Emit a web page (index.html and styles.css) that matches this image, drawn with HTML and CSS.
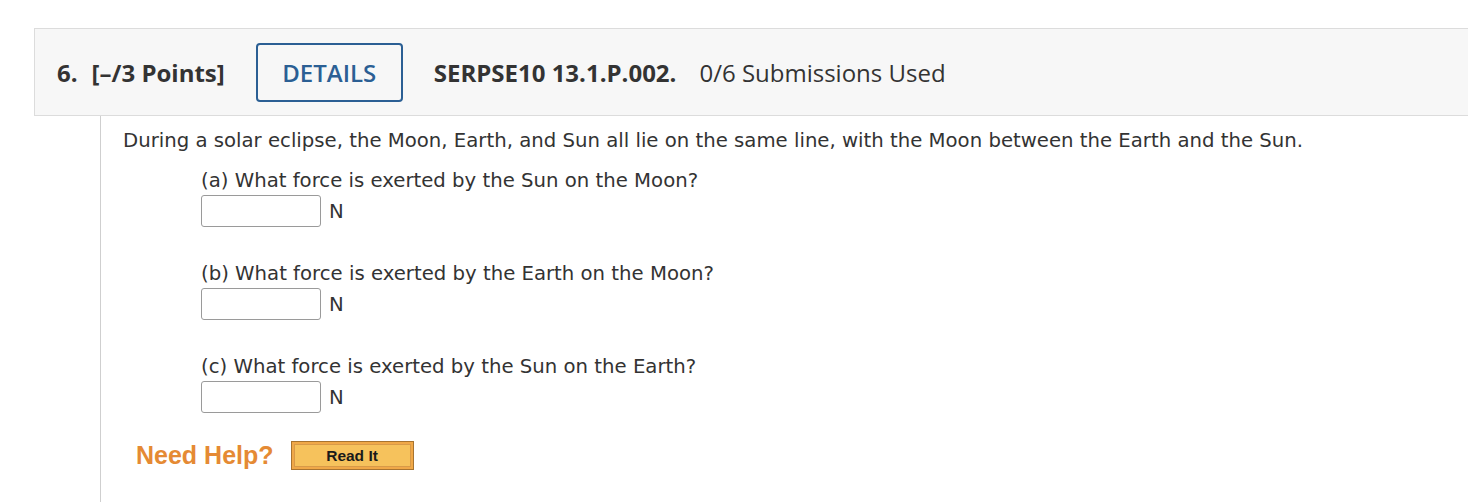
FILE: index.html
```html
<!DOCTYPE html>
<html>
<head>
<meta charset="utf-8">
<link rel="stylesheet" href="styles.css">
</head>
<body>
<div class="question">
  <div class="qhead">
    <span class="qnum">6.</span>
    <span class="points">[–/3 Points]</span>
    <button class="details">DETAILS</button>
    <span class="code">SERPSE10 13.1.P.002.</span>
    <span class="subs">0/6 Submissions Used</span>
  </div>
  <div class="qbody">
    <p class="intro">During a solar eclipse, the Moon, Earth, and Sun all lie on the same line, with the Moon between the Earth and the Sun.</p>
    <div class="part">
      <div class="prompt">(a) What force is exerted by the Sun on the Moon?</div>
      <div class="answer"><span class="box"></span><span class="unit">N</span></div>
    </div>
    <div class="part">
      <div class="prompt">(b) What force is exerted by the Earth on the Moon?</div>
      <div class="answer"><span class="box"></span><span class="unit">N</span></div>
    </div>
    <div class="part">
      <div class="prompt">(c) What force is exerted by the Sun on the Earth?</div>
      <div class="answer"><span class="box"></span><span class="unit">N</span></div>
    </div>
    <div class="help">
      <span class="needhelp">Need Help?</span>
      <span class="readit"><span class="readit-inner">Read It</span></span>
    </div>
  </div>
</div>
</body>
</html>
```

FILE: styles.css
```css
html, body {
  margin: 0;
  padding: 0;
  background: #ffffff;
}
.question {
  padding-top: 28px;
}
.qhead {
  margin-left: 34px;
  height: 86px;
  background: #f7f7f7;
  border: 1px solid #dcdcdc;
  border-right: none;
  display: flex;
  align-items: center;
  font-family: "Open Sans", sans-serif;
  font-size: 24px;
  color: #333333;
  padding-left: 22px;
}
.qnum {
  font-weight: 700;
  margin-right: 14px;
}
.points {
  font-weight: 700;
  margin-right: 31px;
}
.details {
  font-family: "Open Sans", sans-serif;
  font-size: 24px;
  font-weight: 600;
  color: #2b5f94;
  background: #f7f7f7;
  border: 2px solid #2b5f94;
  border-radius: 4px;
  width: 147px;
  height: 59px;
  padding: 0;
  margin-right: 31px;
}
.code {
  font-weight: 700;
  margin-right: 23px;
}
.subs {
  font-weight: 400;
}
.qbody {
  margin-left: 100px;
  border-left: 1px solid #cfcfcf;
  padding-left: 22px;
  padding-top: 12px;
  height: 374px;
  font-family: "DejaVu Sans", Verdana, sans-serif;
  font-size: 19.7px;
  color: #333333;
}
.intro {
  margin: 0 0 14px 0;
  line-height: 26px;
}
.part {
  margin-left: 78px;
  margin-bottom: 34px;
}
.prompt {
  line-height: 26px;
  margin-bottom: 1px;
}
.answer {
  display: flex;
  align-items: center;
}
.box {
  display: inline-block;
  width: 118px;
  height: 30px;
  border: 1px solid #9a9a9a;
  border-radius: 3px;
  background: #fff;
}
.unit {
  margin-left: 8px;
  font-size: 19.7px;
}
.help {
  display: flex;
  align-items: center;
  margin-left: 13px;
  margin-top: -6px;
}
.needhelp {
  font-family: "Liberation Sans", Arial, sans-serif;
  font-weight: 700;
  font-size: 25px;
  color: #e58a34;
  margin-right: 17px;
}
.readit {
  display: inline-block;
  border: 1px solid #a87430;
  background: #f0a848;
  padding: 2px;
}
.readit-inner {
  display: block;
  width: 115px;
  height: 21px;
  line-height: 21px;
  text-align: center;
  background: #f6c25c;
  border: 1px solid #d89a48;
  font-family: "Liberation Sans", Arial, sans-serif;
  font-weight: 700;
  font-size: 15.5px;
  color: #1a1a1a;
}
```
